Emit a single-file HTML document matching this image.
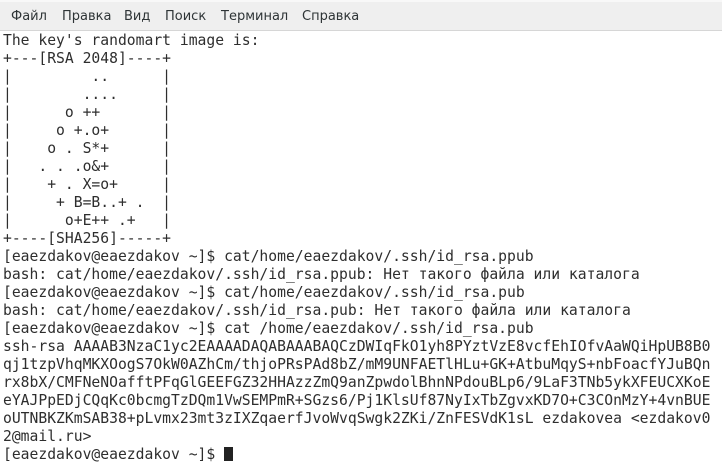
<!DOCTYPE html>
<html><head><meta charset="utf-8"><style>
html,body{margin:0;padding:0;width:722px;height:461px;overflow:hidden;background:#fff}
.menu{position:absolute;left:0;top:0;width:722px;height:31px;background:#efefef;border-top:2px solid #f8f8f8;box-sizing:border-box;border-bottom:1px solid #d6d6d6;font-family:"DejaVu Sans","Liberation Sans",sans-serif;font-size:13px;color:#2e3436}
.menu span{position:absolute;top:7px}
pre{position:absolute;left:3px;top:32px;margin:0;font-family:"DejaVu Sans Mono","Liberation Mono",monospace;font-size:14.7px;line-height:18px;color:#2e2e2e;white-space:pre}
.cur{display:inline-block;width:9px;height:14px;background:#222;vertical-align:-2px}
</style></head><body>
<div class="menu"><span style="left:11px">Файл</span><span style="left:62px">Правка</span><span style="left:124px">Вид</span><span style="left:165px">Поиск</span><span style="left:221px">Терминал</span><span style="left:302px">Справка</span></div>
<pre>The key's randomart image is:
+---[RSA 2048]----+
|         ..      |
|        ....     |
|      o ++       |
|     o +.o+      |
|    o . S*+      |
|   . . .o&+      |
|    + . X=o+     |
|     + B=B..+ .  |
|      o+E++ .+   |
+----[SHA256]-----+
[eaezdakov@eaezdakov ~]$ cat/home/eaezdakov/.ssh/id_rsa.ppub
bash: cat/home/eaezdakov/.ssh/id_rsa.ppub: Нет такого файла или каталога
[eaezdakov@eaezdakov ~]$ cat/home/eaezdakov/.ssh/id_rsa.pub
bash: cat/home/eaezdakov/.ssh/id_rsa.pub: Нет такого файла или каталога
[eaezdakov@eaezdakov ~]$ cat /home/eaezdakov/.ssh/id_rsa.pub
ssh-rsa AAAAB3NzaC1yc2EAAAADAQABAAABAQCzDWIqFkO1yh8PYztVzE8vcfEhIOfvAaWQiHpUB8B0
qj1tzpVhqMKXOogS7OkW0AZhCm/thjoPRsPAd8bZ/mM9UNFAETlHLu+GK+AtbuMqyS+nbFoacfYJuBQn
rx8bX/CMFNeNOafftPFqGlGEEFGZ32HHAzzZmQ9anZpwdolBhnNPdouBLp6/9LaF3TNb5ykXFEUCXKoE
eYAJPpEDjCQqKc0bcmgTzDQm1VwSEMPmR+SGzs6/Pj1KlsUf87NyIxTbZgvxKD7O+C3COnMzY+4vnBUE
oUTNBKZKmSAB38+pLvmx23mt3zIXZqaerfJvoWvqSwgk2ZKi/ZnFESVdK1sL ezdakovea &lt;ezdakov0
2@mail.ru&gt;
[eaezdakov@eaezdakov ~]$ <span class="cur"></span></pre>
</body></html>
